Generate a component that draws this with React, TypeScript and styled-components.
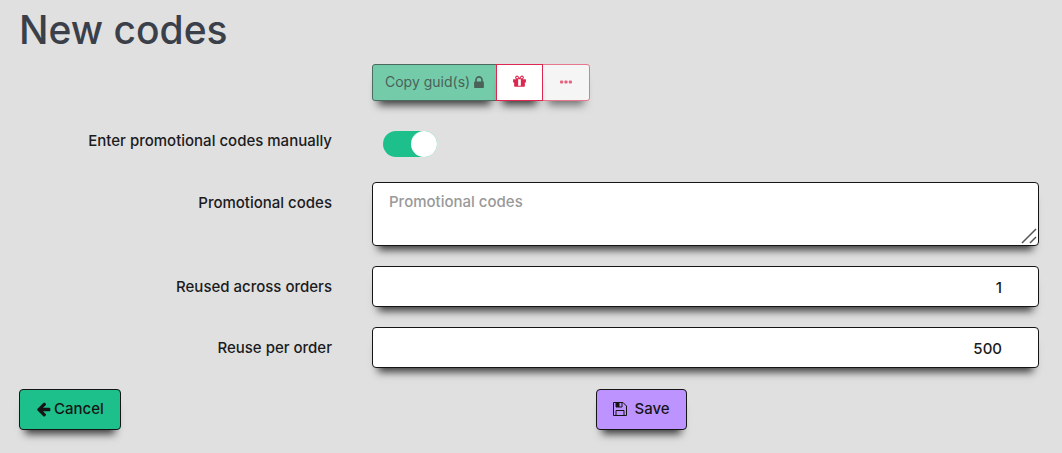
import React, { useState } from "react";
import styled, { createGlobalStyle, css } from "styled-components";

const GlobalStyle = createGlobalStyle`
  *, *::before, *::after { box-sizing: border-box; }
  body {
    margin: 0;
    background: #e0e0e0;
    color: #1b1b1d;
    font: 500 15px/20px Inter, "Liberation Sans", sans-serif;
  }
`;

const raised = css`
  box-shadow: 0 10px 8px -6px rgba(0, 0, 0, 0.75);
`;

const Page = styled.main`
  padding: 4px 23px 20px 19px;
`;

const Title = styled.h1`
  margin: 0 0 8px;
  color: #3a3f49;
  font-size: 39px;
  line-height: 52px;
  font-weight: 500;
`;

const Form = styled.form`
  display: flex;
  flex-direction: column;
  gap: 20px;
`;

const Row = styled.div`
  display: grid;
  grid-template-columns: 313px minmax(0, 1fr);
  column-gap: 40px;
  align-items: start;
`;

const Label = styled.label<{ $compact?: boolean }>`
  padding-top: ${(p) => (p.$compact ? 0 : 11)}px;
  text-align: right;
`;

const Field = styled.div`
  position: relative;
  display: flex;
  grid-column: 2;
`;

const SwitchRow = styled(Row)`
  padding: 10px 0 5px;
`;

const Switch = styled.input`
  appearance: none;
  display: flex;
  align-items: center;
  justify-content: flex-start;
  width: 54px;
  height: 26px;
  margin: 0 0 0 11px;
  border-radius: 13px;
  background: #a9a9a9;
  cursor: pointer;

  &::before {
    content: "";
    width: 26px;
    height: 26px;
    border-radius: 50%;
    background: #fff;
  }

  &:checked {
    justify-content: flex-end;
    background: #1dbf8b;
  }
`;

const inputBox = css`
  width: 100%;
  border: 1px solid #151515;
  border-radius: 4px;
  background: #fff;
  color: #1b1b1d;
  ${raised}
`;

const TextArea = styled.textarea`
  ${inputBox}
  height: 64px;
  padding: 9px 16px;
  font: inherit;
  resize: vertical;

  &::placeholder { color: #999; opacity: 1; }
  &::-webkit-resizer { background: transparent; }
`;

const Grip = styled.svg`
  position: absolute;
  right: 2px;
  bottom: 2px;
  pointer-events: none;
`;

const NumberInput = styled.input`
  ${inputBox}
  height: 41px;
  padding: 1px 36px 0 16px;
  font: inherit;
  text-align: right;
  appearance: textfield;

  &::-webkit-inner-spin-button { appearance: none; margin: 0; }
`;

const ToolButton = styled.button<{ $kind: "copy" | "gift" | "more" }>`
  display: flex;
  align-items: center;
  justify-content: center;
  gap: 4px;
  height: 37px;
  min-width: 47px;
  padding: 0 12px 2px;
  border: 1px solid #dc2850;
  background: #fff;
  color: #dc2850;
  font: 400 14px/20px Inter, "Liberation Sans", sans-serif;
  ${raised}

  & + & { margin-left: -1px; }

  ${(p) => p.$kind === "copy" && css`
    min-width: 125px;
    border-color: #4c6b60;
    border-radius: 3px 0 0 3px;
    background: #74cbaa;
    color: #4b6259;
  `}
  ${(p) => p.$kind === "gift" && css`
    position: relative;
  `}
  ${(p) => p.$kind === "more" && css`
    min-width: 48px;
    border-color: #e5788f;
    border-radius: 0 3px 3px 0;
    background: #f5f5f5;
    color: #e5637f;
    box-shadow: 0 10px 8px -6px rgba(0, 0, 0, 0.5);
  `}
`;

const Footer = styled.footer`
  display: grid;
  grid-template-columns: 13fr 10fr;
  justify-items: start;
  margin-top: 1px;
`;

const ActionButton = styled.button<{ $tone: string; $gap: number }>`
  display: flex;
  align-items: center;
  gap: ${(p) => p.$gap}px;
  height: 41px;
  padding: 0 16px 2px;
  border: 1px solid #151515;
  border-radius: 4px;
  background: ${(p) => p.$tone};
  color: #151515;
  font: inherit;
  cursor: pointer;
  ${raised}
`;

const LockIcon = () => (
  <svg width="10" height="12" viewBox="320 128 1152 1408" fill="currentColor" aria-hidden="true">
    <path d="M640 768h512v-192q0-106-75-181t-181-75-181 75-75 181v192zm832 96v576q0 40-28 68t-68 28h-960q-40 0-68-28t-28-68v-576q0-40 28-68t68-28h32v-192q0-184 132-316t316-132 316 132 132 316v192h32q40 0 68 28t28 68z" />
  </svg>
);

const GiftIcon = () => (
  <svg width="15" height="15" viewBox="0 0 1792 1792" fill="currentColor" aria-hidden="true">
    <path d="M1056 1356v-716h-320v716q0 25 18 38.500t46 13.500h192q28 0 46-13.500t18-38.500zm-456-844h195l-126-161q-26-31-69-31-40 0-68 28t-28 68 28 68 68 28zm688-96q0-40-28-68t-68-28q-43 0-69 31l-125 161h194q40 0 68-28t28-68zm376 256v320q0 14-9 23t-23 9h-96v416q0 40-28 68t-68 28h-1088q-40 0-68-28t-28-68v-416h-96q-14 0-23-9t-9-23v-320q0-14 9-23t23-9h440q-93 0-158.500-65.500t-65.500-158.500 65.500-158.500 158.500-65.500q107 0 168 77l128 165 128-165q61-77 168-77 93 0 158.500 65.500t65.500 158.500-65.500 158.500-158.500 65.500h440q14 0 23 9t9 23z" />
  </svg>
);

const DotsIcon = () => (
  <svg width="12" height="4" viewBox="0 0 12 4" fill="currentColor" aria-hidden="true">
    <rect x="0" y="0.500" width="3.200" height="3" rx="1" />
    <rect x="4.400" y="0.500" width="3.200" height="3" rx="1" />
    <rect x="8.800" y="0.500" width="3.200" height="3" rx="1" />
  </svg>
);

const ArrowIcon = () => (
  <svg width="15" height="16" viewBox="64 0 1664 1792" fill="currentColor" aria-hidden="true">
    <path d="M1664 896v128q0 53-32.500 90.500t-84.500 37.500h-704l293 294q38 36 38 90t-38 90l-75 76q-37 37-90 37-52 0-91-37l-651-652q-37-37-37-90 0-52 37-91l651-650q38-38 91-38 52 0 90 38l75 74q38 38 38 91t-38 91l-293 293h704q52 0 84.500 37.500t32.500 90.500z" />
  </svg>
);

const SaveIcon = () => (
  <svg width="14" height="14" viewBox="0 0 14 14" fill="none" stroke="currentColor" aria-hidden="true">
    <path d="M.5 .5H10L13.500 4V13.500H.5Z" />
    <path d="M3 13.500V8.500H11V13.500" />
    <path d="M3 .5V5H9V.5" />
    <path d="M3 .5H6.500V5H3Z" fill="currentColor" stroke="none" />
  </svg>
);

export default function App() {
  const [manual, setManual] = useState(true);

  return (
    <Page>
      <GlobalStyle />
      <Title>New codes</Title>
      <Form onSubmit={(e) => e.preventDefault()}>
        <Row>
          <Field>
            <ToolButton type="button" $kind="copy" disabled>
              Copy guid(s)
              <LockIcon />
            </ToolButton>
            <ToolButton type="button" $kind="gift" aria-label="Gift">
              <GiftIcon />
            </ToolButton>
            <ToolButton type="button" $kind="more" aria-label="More" disabled>
              <DotsIcon />
            </ToolButton>
          </Field>
        </Row>
        <SwitchRow>
          <Label htmlFor="manual" $compact>Enter promotional codes manually</Label>
          <Field>
            <Switch
              id="manual"
              type="checkbox"
              role="switch"
              checked={manual}
              onChange={(e) => setManual(e.target.checked)}
            />
          </Field>
        </SwitchRow>
        <Row>
          <Label htmlFor="codes">Promotional codes</Label>
          <Field>
            <TextArea id="codes" placeholder="Promotional codes" />
            <Grip width="16" height="16" viewBox="0 0 16 16" stroke="#555" strokeWidth="1.500" aria-hidden="true">
              <path d="M1 15L15 1M9 15L15 9" />
            </Grip>
          </Field>
        </Row>
        <Row>
          <Label htmlFor="across">Reused across orders</Label>
          <Field>
            <NumberInput id="across" type="number" defaultValue={1} />
          </Field>
        </Row>
        <Row>
          <Label htmlFor="per-order">Reuse per order</Label>
          <Field>
            <NumberInput id="per-order" type="number" defaultValue={500} />
          </Field>
        </Row>
        <Footer>
          <ActionButton type="button" $tone="#1dbf8b" $gap={3}>
            <ArrowIcon />
            Cancel
          </ActionButton>
          <ActionButton type="submit" $tone="#bd93ff" $gap={8}>
            <SaveIcon />
            Save
          </ActionButton>
        </Footer>
      </Form>
    </Page>
  );
}
